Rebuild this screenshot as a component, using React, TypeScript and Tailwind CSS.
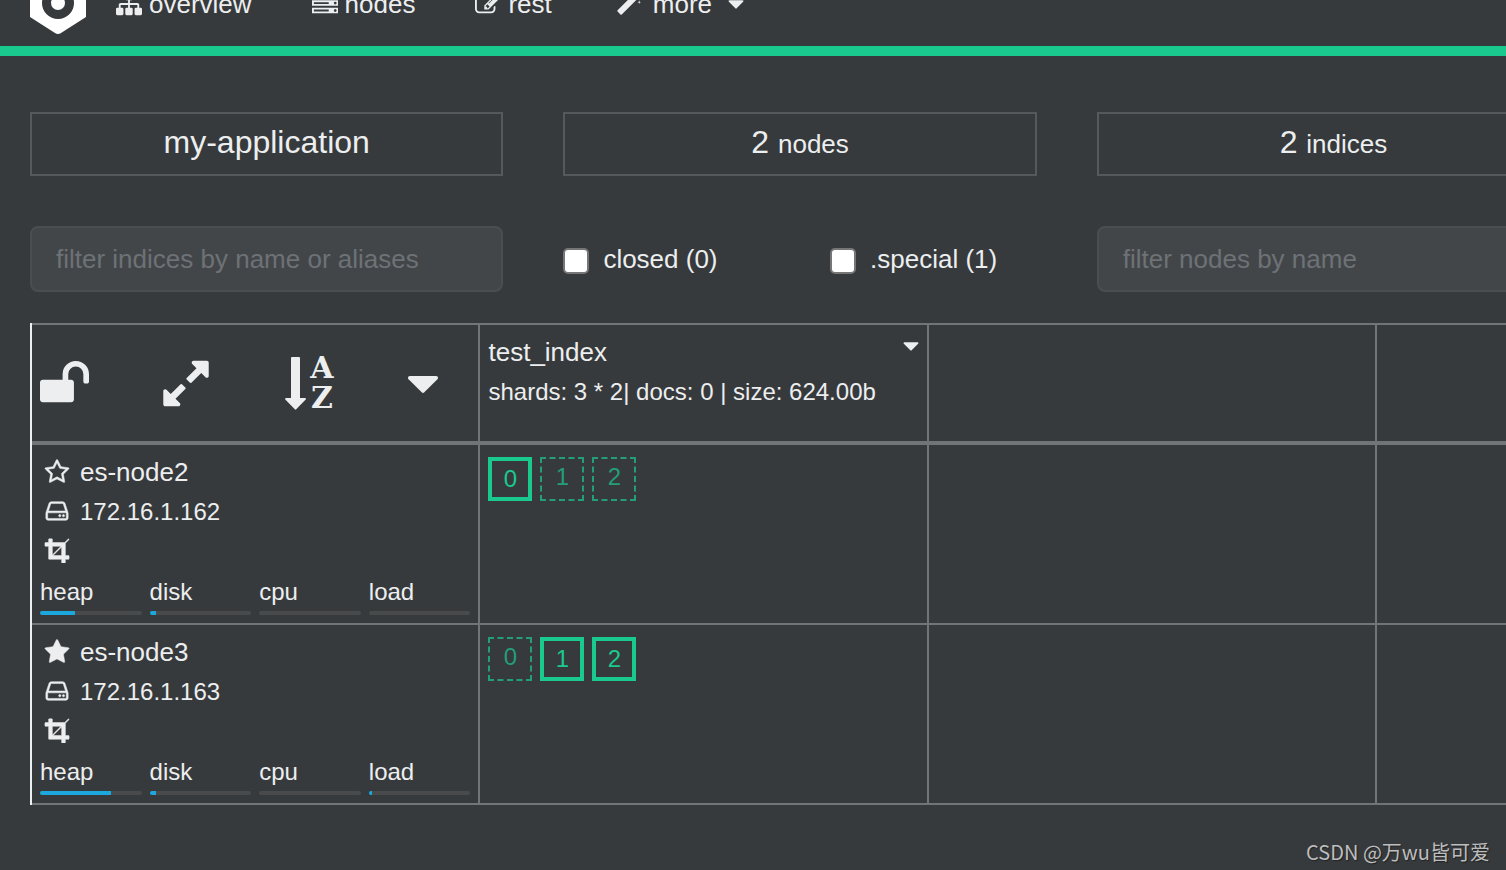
import React from "react";

const ICONS = {
  sitemap:
    "M1792 1248v320q0 40-28 68t-68 28h-320q-40 0-68-28t-28-68v-320q0-40 28-68t68-28h96v-192h-512v192h96q40 0 68 28t28 68v320q0 40-28 68t-68 28h-320q-40 0-68-28t-28-68v-320q0-40 28-68t68-28h96v-192h-512v192h96q40 0 68 28t28 68v320q0 40-28 68t-68 28h-320q-40 0-68-28t-28-68v-320q0-40 28-68t68-28h96v-192q0-52 38-90t90-38h512v-192h-96q-40 0-68-28t-28-68v-320q0-40 28-68t68-28h320q40 0 68 28t28 68v320q0 40-28 68t-68 28h-96v192h512q52 0 90 38t38 90v192h96q40 0 68 28t28 68z",
  server:
    "M128 1408h1024v-128h-1024v128zm0-512h1024v-128h-1024v128zm1568 448q0-40-28-68t-68-28-68 28-28 68 28 68 68 28 68-28 28-68zm-1568-960h1024v-128h-1024v128zm1568 448q0-40-28-68t-68-28-68 28-28 68 28 68 68 28 68-28 28-68zm0-512q0-40-28-68t-68-28-68 28-28 68 28 68 68 28 68-28 28-68zm96 832v384h-1792v-384h1792zm0-512v384h-1792v-384h1792zm0-512v384h-1792v-384h1792z",
  edit:
    "M888 1184l116-116-152-152-116 116v56h96v96h56zm440-720q-16-16-33 1l-350 350q-17 17-1 33t33-1l350-350q17-17 1-33zm80 594v190q0 119-84.500 203.500t-203.500 84.500h-832q-119 0-203.500-84.500t-84.500-203.500v-832q0-119 84.500-203.500t203.500-84.500h832q63 0 117 25 15 7 18 23 3 17-9 29l-49 49q-14 14-32 8-23-6-45-6h-832q-66 0-113 47t-47 113v832q0 66 47 113t113 47h832q66 0 113-47t47-113v-126q0-13 9-22l64-64q15-15 35-7t20 29zm-96-738l288 288-672 672h-288v-288zm444 132l-92 92-288-288 92-92q28-28 68-28t68 28l152 152q28 28 28 68t-28 68z",
  magic:
    "M1254 581l293-293-107-107-293 293zm447-293q0 27-18 45l-1286 1286q-18 18-45 18t-45-18l-198-198q-18-18-18-45t18-45l1286-1286q18-18 45-18t45 18l198 198q18 18 18 45zm-1351-190l98 30-98 30-30 98-30-98-98-30 98-30 30-98zm350 162l196 60-196 60-60 196-60-196-196-60 196-60 60-196zm930 478l98 30-98 30-30 98-30-98-98-30 98-30 30-98zm-640-640l98 30-98 30-30 98-30-98-98-30 98-30 30-98z",
  caret:
    "M1408 704q0 26-19 45l-448 448q-19 19-45 19t-45-19l-448-448q-19-19-19-45t19-45 45-19h896q26 0 45 19t19 45z",
  unlock:
    "M1728 576v256q0 26-19 45t-45 19h-64q-26 0-45-19t-19-45v-256q0-106-75-181t-181-75-181 75-75 181v192h96q40 0 68 28t28 68v576q0 40-28 68t-68 28h-960q-40 0-68-28t-28-68v-576q0-40 28-68t68-28h672v-192q0-185 131.500-316.500t316.500-131.500 316.500 131.500 131.500 316.500z",
  expand:
    "M883 1056q0 13-10 23l-332 332 144 144q19 19 19 45t-19 45-45 19h-448q-26 0-45-19t-19-45v-448q0-26 19-45t45-19 45 19l144 144 332-332q10-10 23-10t23 10l114 114q10 10 10 23zm781-864v448q0 26-19 45t-45 19-45-19l-144-144-332 332q-10 10-23 10t-23-10l-114-114q-10-10-10-23t10-23l332-332-144-144q-19-19-19-45t19-45 45-19h448q26 0 45 19t19 45z",
  star:
    "M1728 647q0 22-26 48l-363 354 86 500q1 7 1 20 0 21-10.500 35.500t-30.500 14.500q-19 0-40-12l-449-236-449 236q-22 12-40 12-21 0-31.500-14.500t-10.500-35.500q0-6 2-20l86-500-364-354q-25-27-25-48 0-37 56-46l502-73 225-455q19-41 49-41t49 41l225 455 502 73q56 9 56 46z",
  starOutline:
    "M1201 1004l306-297-422-62-189-382-189 382-422 62 306 297-73 421 378-199 377 199zm527-357q0 22-26 48l-363 354 86 500q1 7 1 20 0 50-41 50-19 0-40-12l-449-236-449 236q-22 12-40 12-21 0-31.500-14.500t-10.500-35.500q0-6 2-20l86-500-364-354q-25-27-25-48 0-37 56-46l502-73 225-455q19-41 49-41t49 41l225 455 502 73q56 9 56 46z",
  disk:
    "M1168 1216q0 33-23.500 56.500t-56.500 23.500-56.500-23.500-23.500-56.500 23.500-56.500 56.500-23.500 56.500 23.500 23.500 56.500zm256 0q0 33-23.500 56.500t-56.500 23.500-56.500-23.500-23.500-56.500 23.500-56.500 56.500-23.500 56.500 23.500 23.500 56.500zm112 160v-320q0-13-9.500-22.500t-22.500-9.500h-1216q-13 0-22.500 9.500t-9.500 22.500v320q0 13 9.500 22.500t22.500 9.500h1216q13 0 22.500-9.500t9.500-22.500zm-1230-480h1180l-157-482q-4-13-16-21.500t-26-8.500h-782q-14 0-26 8.500t-16 21.500zm1358 160v320q0 66-47 113t-113 47h-1216q-66 0-113-47t-47-113v-320q0-25 16-75l197-606q17-53 63-86t101-33h782q55 0 101 33t63 86l197 606q16 50 16 75z",
  crop:
    "M557 1280h595v-595zm-45-45l595-595h-595v595zm1152 77v192q0 14-9 23t-23 9h-224v224q0 14-9 23t-23 9h-192q-14 0-23-9t-9-23v-224h-864q-14 0-23-9t-9-23v-864h-224q-14 0-23-9t-9-23v-192q0-14 9-23t23-9h224v-224q0-14 9-23t23-9h192q14 0 23 9t9 23v224h851l246-247q10-9 23-9t23 9q9 10 9 23t-9 23l-247 246v851h224q14 0 23 9t9 23z",
};

type IconProps = {
  name: keyof typeof ICONS;
  className?: string;
  viewBox?: string;
};

function Icon({ name, className = "h-[26px] w-[26px]", viewBox = "0 0 1792 1792" }: IconProps) {
  return (
    <svg viewBox={viewBox} fill="currentColor" aria-hidden="true" className={`shrink-0 ${className}`}>
      <path d={ICONS[name]} />
    </svg>
  );
}

type Shard = { id: number; assigned: boolean };

type ClusterNode = {
  name: string;
  ip: string;
  master: boolean;
  metrics: { label: string; value: number }[];
  shards: Shard[];
};

const nodes: ClusterNode[] = [
  {
    name: "es-node2",
    ip: "172.16.1.162",
    master: false,
    metrics: [
      { label: "heap", value: 34 },
      { label: "disk", value: 6 },
      { label: "cpu", value: 0 },
      { label: "load", value: 0 },
    ],
    shards: [
      { id: 0, assigned: true },
      { id: 1, assigned: false },
      { id: 2, assigned: false },
    ],
  },
  {
    name: "es-node3",
    ip: "172.16.1.163",
    master: true,
    metrics: [
      { label: "heap", value: 70 },
      { label: "disk", value: 6 },
      { label: "cpu", value: 0 },
      { label: "load", value: 3 },
    ],
    shards: [
      { id: 0, assigned: false },
      { id: 1, assigned: true },
      { id: 2, assigned: true },
    ],
  },
];

function Navbar() {
  return (
    <header className="flex h-14 items-end overflow-hidden border-b-10 border-[#1ac98e] px-[30px] pb-3">
      <a href="#" aria-label="home" className="shrink-0">
        <svg viewBox="0 0 56 64" className="h-16 w-14">
          <path d="M28 0 56 16V47L31 63Q28 65 25 63L0 47V16Z" fill="#fff" />
          <circle cx="28" cy="33" r="11.500" fill="none" stroke="#373a3c" strokeWidth="9" />
        </svg>
      </a>
      <nav className="mb-3 ml-[30px] flex gap-[60px] leading-9">
        <a href="#overview" className="flex items-center gap-[7px]">
          <Icon name="sitemap" />
          overview
        </a>
        <a href="#nodes" className="flex items-center gap-[7px]">
          <Icon name="server" />
          nodes
        </a>
        <a href="#rest" className="flex items-center gap-[7px]">
          <Icon name="edit" />
          rest
        </a>
        <button type="button" className="flex items-center gap-[7px]">
          <Icon name="magic" className="h-[26px] w-[34px]" />
          more
          <Icon name="caret" className="ml-1 h-[26px] w-[26px]" />
        </button>
      </nav>
    </header>
  );
}

function Stats() {
  const box = "h-16 border-2 border-[#55595c] text-center text-[32px] leading-[56px]";
  return (
    <div className="grid grid-cols-3 gap-15">
      <div className={box}>my-application</div>
      <div className={box}>
        2 <span className="text-[26px]">nodes</span>
      </div>
      <div className={box}>
        2 <span className="text-[26px]">indices</span>
      </div>
    </div>
  );
}

function Filters() {
  const input =
    "h-[66px] w-full rounded-lg border-2 border-[#4b4d4f] bg-[#434649] px-6 placeholder:text-[#6d7276] outline-none";
  const checkbox =
    "mt-1 h-[26px] w-[26px] shrink-0 appearance-none rounded-[5px] border-2 border-[#767676] bg-white checked:bg-[#1ac98e]";
  return (
    <div className="mt-[50px] grid grid-cols-3 items-center gap-15">
      <input type="text" aria-label="filter indices" placeholder="filter indices by name or aliases" className={input} />
      <div className="grid grid-cols-2 gap-15 whitespace-nowrap">
        <label className="flex items-center gap-[14px]">
          <input type="checkbox" className={checkbox} />
          closed (0)
        </label>
        <label className="flex items-center gap-[14px]">
          <input type="checkbox" className={checkbox} />
          .special (1)
        </label>
      </div>
      <input type="text" aria-label="filter nodes" placeholder="filter nodes by name" className={input} />
    </div>
  );
}

function TableActions() {
  return (
    <div className="grid grid-cols-4 items-center gap-15">
      <button type="button" aria-label="unlock">
        <Icon name="unlock" viewBox="64 0 1664 1792" className="h-[53px] w-[49px]" />
      </button>
      <button type="button" aria-label="expand">
        <Icon name="expand" viewBox="128 0 1536 1792" className="h-[53px] w-[46px]" />
      </button>
      <button type="button" aria-label="sort by name" className="flex items-center gap-1">
        <svg viewBox="0 0 21 53" fill="currentColor" aria-hidden="true" className="h-[53px] w-[21px] shrink-0">
          <path d="M7 0h7q1 0 1 1v40h5q1.500 0 .7 1.500L11.200 52.300q-.7.700-1.400 0L.3 42.500Q-.3 41 1 41h5V1q0-1 1-1z" />
        </svg>
        <span className="flex flex-col items-center font-['DejaVu_Serif',serif] text-[30px] leading-[30px] font-bold">
          <span>A</span>
          <span>Z</span>
        </span>
      </button>
      <button type="button" aria-label="options">
        <Icon name="caret" viewBox="384 0 1024 1792" className="h-[53px] w-[30px]" />
      </button>
    </div>
  );
}

function NodeInfo({ node }: { node: ClusterNode }) {
  const icon = "mb-0.5 h-[26px] w-[26px] stroke-current stroke-[36px]";
  return (
    <>
      <div className="flex items-center gap-[10px] pl-1">
        <Icon name={node.master ? "star" : "starOutline"} className={icon} />
        {node.name}
      </div>
      <div className="flex items-center gap-[10px] pl-1 text-2xl leading-[39px]">
        <Icon name="disk" className={icon} />
        {node.ip}
      </div>
      <div className="flex h-[39px] items-center pl-1">
        <Icon name="crop" viewBox="-64 0 1792 1792" className={icon} />
      </div>
      <div className="grid grid-cols-4 gap-2 pt-[3px] text-2xl leading-[37px]">
        {node.metrics.map((metric) => (
          <div key={metric.label}>
            {metric.label}
            <div className="mt-px h-1 overflow-hidden rounded-sm bg-[#484a4c]">
              <div className="h-full bg-[#1ca8dd]" style={{ width: `${metric.value}%` }} />
            </div>
          </div>
        ))}
      </div>
    </>
  );
}

function ShardBox({ shard }: { shard: Shard }) {
  return (
    <span
      className={`h-11 w-11 text-center text-2xl leading-9 ${
        shard.assigned ? "border-4 border-[#1ac98e] text-[#1ac98e]" : "border-2 border-dashed border-[#239e77] text-[#239e77]"
      }`}
    >
      {shard.id}
    </span>
  );
}

function IndicesTable() {
  const head = "h-[122px] border-t-2 border-r-2 border-b-4 border-[#727578] p-2 text-left font-normal";
  const cell = "h-[180px] border-r-2 border-b-2 border-[#727578] p-2 text-left font-normal";
  return (
    <table className="mt-[31px] ml-[30px] w-[119.25%] table-fixed border-separate border-spacing-0 border-l-2 border-[#eceeef] leading-[39px]">
      <thead>
        <tr>
          <th className={`${head} align-middle`}>
            <TableActions />
          </th>
          <th className={`${head} align-top`}>
            <div className="flex items-start justify-between">
              test_index
              <button type="button" aria-label="index options">
                <Icon name="caret" viewBox="384 0 1024 1792" className="block h-[26px] w-4" />
              </button>
            </div>
            <div className="text-2xl leading-[39px]">shards: 3 * 2| docs: 0 | size: 624.00b</div>
          </th>
          <th className={head}></th>
          <th className={head}></th>
        </tr>
      </thead>
      <tbody>
        {nodes.map((node) => (
          <tr key={node.name}>
            <th scope="row" className={`${cell} align-top`}>
              <NodeInfo node={node} />
            </th>
            <td className={`${cell} align-top`}>
              <div className="flex gap-2 pt-1">
                {node.shards.map((shard) => (
                  <ShardBox key={shard.id} shard={shard} />
                ))}
              </div>
            </td>
            <td className={cell}></td>
            <td className={cell}></td>
          </tr>
        ))}
      </tbody>
    </table>
  );
}

export default function App() {
  return (
    <div className="relative min-h-screen overflow-hidden bg-[#373a3c] font-['Liberation_Sans',Arial,sans-serif] text-[26px] text-[#eceeef]">
      <Navbar />
      <main className="pt-14">
        {/* the grid runs past the right edge of the window */}
        <div className="w-[106.25%] px-[30px]">
          <Stats />
          <Filters />
        </div>
        <IndicesTable />
      </main>
      <div className="absolute right-4 bottom-1 font-['Noto_Sans_CJK_SC',sans-serif] text-xl text-[#bcbdbe] [text-shadow:1px_1px_1px_#222]">
        CSDN @万wu皆可爱
      </div>
    </div>
  );
}
